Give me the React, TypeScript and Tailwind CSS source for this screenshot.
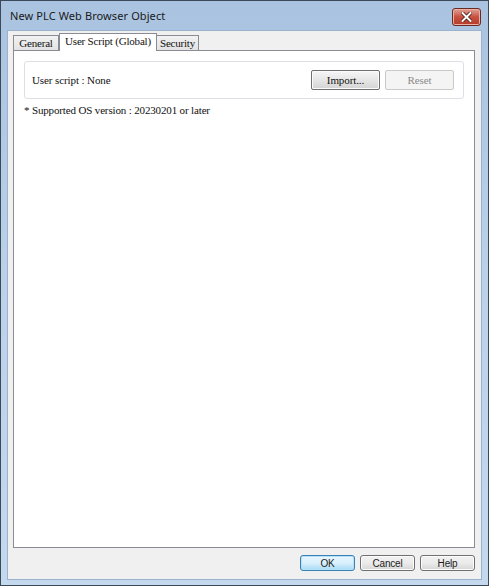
import React from 'react'

const serif = { fontFamily: '"Liberation Serif", "Times New Roman", serif' }
const sans = { fontFamily: '"Liberation Sans", Arial, sans-serif' }

const DialogButton = ({ label, primary }: { label: string; primary?: boolean }) => (
    <div
        style={sans}
        className={
            'flex h-[16px] w-[55px] items-center justify-center rounded-[3px] border text-[10px] tracking-[-0.2px] text-[#1b1b1b] ' +
            (primary
                ? 'border-[#3c7fb1] bg-gradient-to-b from-[#eaf6fd] via-[#d9f0fc] to-[#a7d9f5] shadow-[inset_0_0_0_1px_#b4e4fb]'
                : 'border-[#707070] bg-gradient-to-b from-[#f2f2f2] via-[#ebebeb] to-[#d6d6d6] shadow-[inset_0_0_0_1px_#fcfcfc]')
        }
    >
        {label}
    </div>
)

export default function App() {
    return (
        <div className="h-[586px] w-[489px] border border-[#3b4a5a] bg-gradient-to-b from-[#a9c3e0] via-[#bcd2ea] to-[#c4d8ee] flex flex-col">
            {/* title bar */}
            <div className="flex h-[29px] items-start justify-between pl-[9px] pr-[7px]">
                <p
                    style={{ fontFamily: '"Noto Sans", "Open Sans", sans-serif' }}
                    className="mt-[7px] text-[11px] tracking-[0.1px] text-[#1a1a1a]"
                >
                    New PLC Web Browser Object
                </p>
                <div className="mt-[7px] flex h-[18px] w-[29px] items-center justify-center rounded-[3px] border border-[#6d2a22] bg-gradient-to-b from-[#e0a196] via-[#c7503f] to-[#b73a28] shadow-[inset_0_0_0_1px_#e8b0a6]">
                    <svg width="11" height="10" viewBox="0 0 11 10">
                        <path d="M1.5 1 L9.5 9 M9.5 1 L1.5 9" stroke="#4a1a14" strokeWidth="3.6" strokeLinecap="square" />
                        <path d="M1.5 1 L9.5 9 M9.5 1 L1.5 9" stroke="#ffffff" strokeWidth="2" strokeLinecap="square" />
                    </svg>
                </div>
            </div>

            {/* client area */}
            <div className="mx-[6px] mb-[5px] flex flex-1 flex-col border border-[#9ab2cc] bg-[#f0f0f0] px-[5px] pt-[1px]">
                {/* tabs */}
                <div style={serif} className="relative z-10 flex h-[18px] items-end text-[11px] tracking-[-0.2px] text-[#111]">
                    <div className="flex h-[15px] w-[46px] items-center justify-center border border-b-0 border-[#898c95] bg-gradient-to-b from-[#f2f2f2] to-[#e3e3e3]">
                        General
                    </div>
                    <div className="-mb-px flex h-[18px] w-[98px] items-center justify-center border border-b-0 border-[#898c95] bg-white pb-[2px]">
                        User Script (Global)
                    </div>
                    <div className="flex h-[15px] w-[42px] items-center justify-center border border-b-0 border-l-0 border-[#898c95] bg-gradient-to-b from-[#f2f2f2] to-[#e3e3e3]">
                        Security
                    </div>
                </div>

                {/* tab page */}
                <div className="flex h-[498px] w-[462px] flex-col border border-[#898c95] bg-white px-[10px] pt-[10px]">
                    <div className="flex h-[38px] items-center justify-between rounded-[3px] border border-[#dcdfe3] pl-[7px] pr-[9px]">
                        <p style={serif} className="text-[11px] tracking-[-0.1px] text-[#111]">
                            User script : None
                        </p>
                        <div className="flex gap-[5px]" style={serif}>
                            <div className="flex h-[20px] w-[69px] items-center justify-center rounded-[2px] border border-[#707070] bg-gradient-to-b from-[#f6f6f6] via-[#e6e6e6] to-[#d4d4d4] text-[11px] tracking-[-0.1px] text-[#111] shadow-[inset_0_0_0_1px_#fbfbfb]">
                                Import...
                            </div>
                            <div className="flex h-[20px] w-[69px] items-center justify-center rounded-[2px] border border-[#c9c9c9] bg-[#f4f4f4] text-[11px] tracking-[-0.1px] text-[#8a8a8a]">
                                Reset
                            </div>
                        </div>
                    </div>
                    <p style={serif} className="mt-[3px] text-[11px] tracking-[-0.15px] text-[#111]">
                        * Supported OS version : 20230201 or later
                    </p>
                </div>

                {/* dialog buttons */}
                <div className="mt-[7px] flex justify-end gap-[5px] pr-[1px]">
                    <DialogButton label="OK" primary />
                    <DialogButton label="Cancel" />
                    <DialogButton label="Help" />
                </div>
            </div>
        </div>
    )
}
